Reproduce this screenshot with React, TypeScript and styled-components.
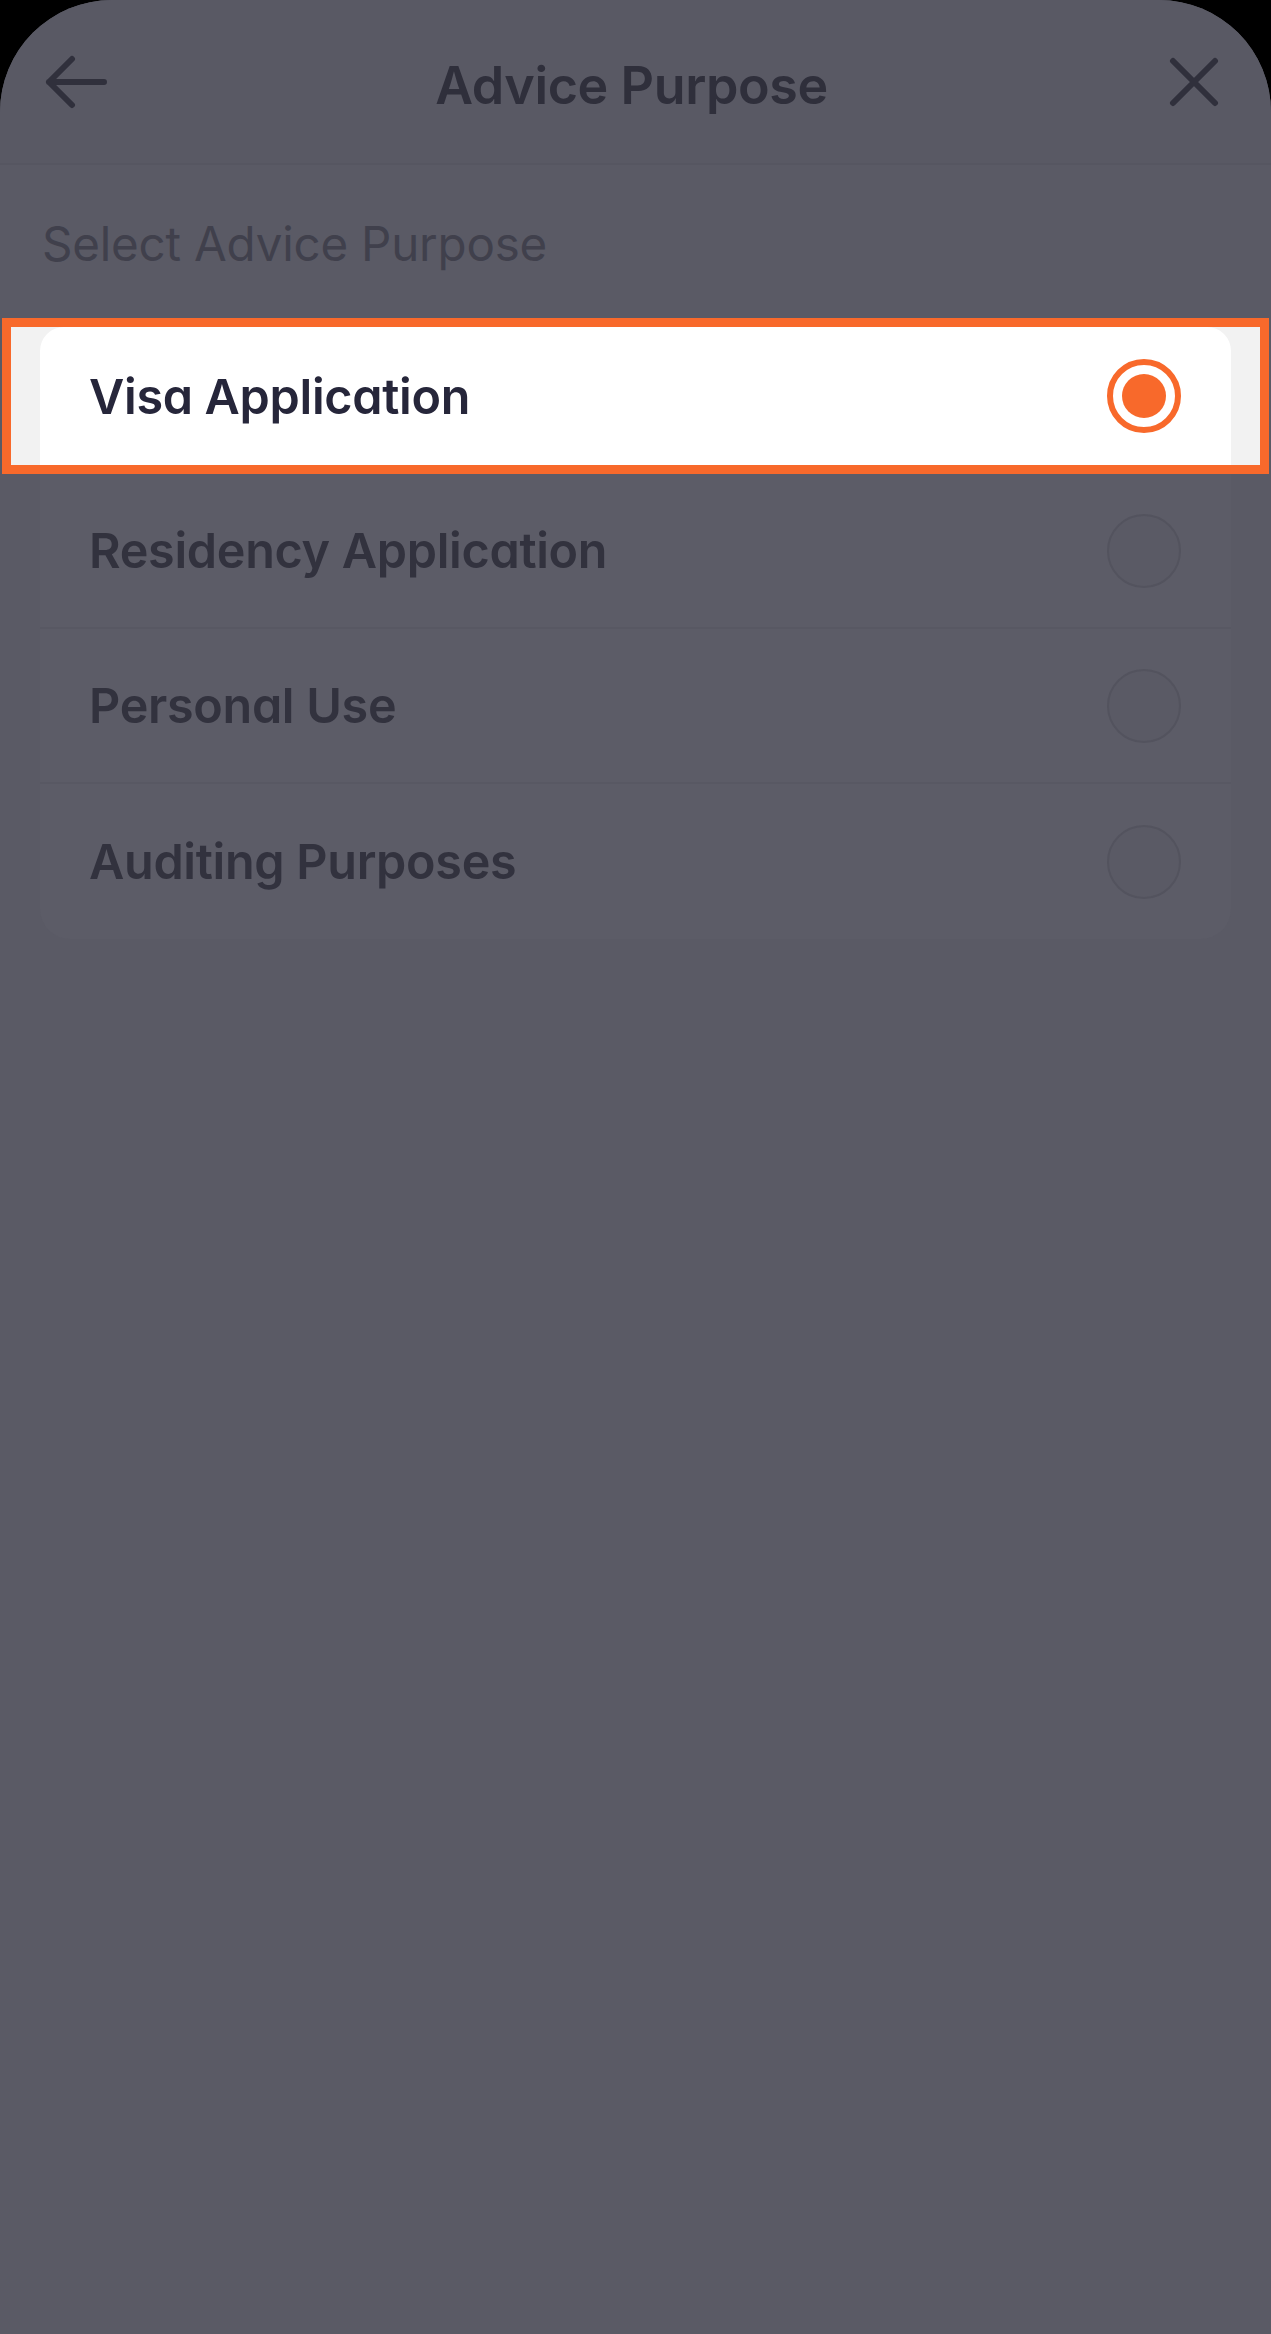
import React from "react";
import styled, { createGlobalStyle } from "styled-components";

const GlobalStyle = createGlobalStyle`
  html, body { margin: 0; padding: 0; background: #000; }
  body { font-family: Inter, "Noto Sans", sans-serif; -webkit-font-smoothing: antialiased; }
  * { box-sizing: border-box; }
`;

const Screen = styled.div`
  width: 1271px;
  min-height: 2334px;
  background: #5a5a65;
  border-radius: 112px 112px 0 0;
  overflow: hidden;
  font-feature-settings: "cv11" 1;
`;

const Header = styled.header`
  height: 165px;
  display: grid;
  grid-template-columns: 80px 1fr 80px;
  align-items: center;
  padding: 0 52px 0 44px;
  background: #595964;
  border-bottom: 2px solid #565661;
`;

const IconButton = styled.button<{ $align: "start" | "end" }>`
  border: 0;
  background: none;
  padding: 0;
  display: flex;
  justify-content: ${(p) => (p.$align === "start" ? "flex-start" : "flex-end")};
  align-items: center;
  color: #30303c;
`;

const Title = styled.h1`
  margin: 8px 0 0;
  text-align: center;
  font-size: 52px;
  font-weight: 600;
  color: #2f2f3b;
  letter-spacing: -0.4px;
`;

const Content = styled.main`
  padding: 50px 40px 0;
`;

const SectionLabel = styled.h2`
  margin: 0 0 46px 2px;
  font-size: 47.5px;
  font-weight: 400;
  color: #40404c;
  letter-spacing: -0.2px;
`;

const Card = styled.div`
  background: #5c5c67;
  border-radius: 30px;
`;

const Spotlight = styled.div`
  margin: 0 -38px;
  height: 156px;
  border: 9px solid #f8692b;
  padding: 0 29px;
  background: #f2f2f2;
  position: relative;
  z-index: 1;
`;

const Row = styled.div<{ $active?: boolean; $last?: boolean }>`
  height: ${(p) => (p.$active ? "138px" : "155px")};
  display: flex;
  align-items: center;
  justify-content: space-between;
  padding: 0 50px 0 49px;
  background: ${(p) => (p.$active ? "#ffffff" : "transparent")};
  border-radius: ${(p) => (p.$active ? "24px 24px 0 0" : "0")};
  border-bottom: ${(p) => (p.$last || p.$active ? "none" : "2px solid #585863")};
`;

const RowLabel = styled.span<{ $active?: boolean }>`
  font-size: 48.5px;
  font-weight: 600;
  color: ${(p) => (p.$active ? "#26263a" : "#32323e")};
  letter-spacing: -0.3px;
`;

const Radio = styled.span<{ $checked?: boolean }>`
  width: 74px;
  height: 74px;
  border-radius: 50%;
  flex-shrink: 0;
  display: flex;
  align-items: center;
  justify-content: center;
  border: ${(p) => (p.$checked ? "6px solid #f8692b" : "2px solid #53535e")};
  background: ${(p) => (p.$checked ? "#fff" : "#5a5a65")};
`;

const Dot = styled.span`
  width: 44px;
  height: 44px;
  border-radius: 50%;
  background: #f8692b;
`;

const options = [
  "Visa Application",
  "Residency Application",
  "Personal Use",
  "Auditing Purposes",
];

export default function App() {
  const selected = 0;
  return (
    <>
      <GlobalStyle />
      <Screen>
        <Header>
          <IconButton $align="start" aria-label="Back">
            <svg width="64" height="54" viewBox="0 0 64 54" fill="none" stroke="currentColor" strokeWidth="6" strokeLinecap="round" strokeLinejoin="round">
              <path d="M60 27H5M28 4L5 27l23 23" />
            </svg>
          </IconButton>
          <Title>Advice Purpose</Title>
          <IconButton $align="end" aria-label="Close">
            <svg width="50" height="50" viewBox="0 0 50 50" fill="none" stroke="currentColor" strokeWidth="6" strokeLinecap="round">
              <path d="M4 4l42 42M46 4L4 46" />
            </svg>
          </IconButton>
        </Header>
        <Content>
          <SectionLabel>Select Advice Purpose</SectionLabel>
          <Card>
            {options.map((o, i) =>
              i === selected ? (
                <Spotlight key={o}>
                  <Row $active>
                    <RowLabel $active>{o}</RowLabel>
                    <Radio $checked>
                      <Dot />
                    </Radio>
                  </Row>
                </Spotlight>
              ) : (
                <Row key={o} $last={i === options.length - 1}>
                  <RowLabel>{o}</RowLabel>
                  <Radio />
                </Row>
              )
            )}
          </Card>
        </Content>
      </Screen>
    </>
  );
}
